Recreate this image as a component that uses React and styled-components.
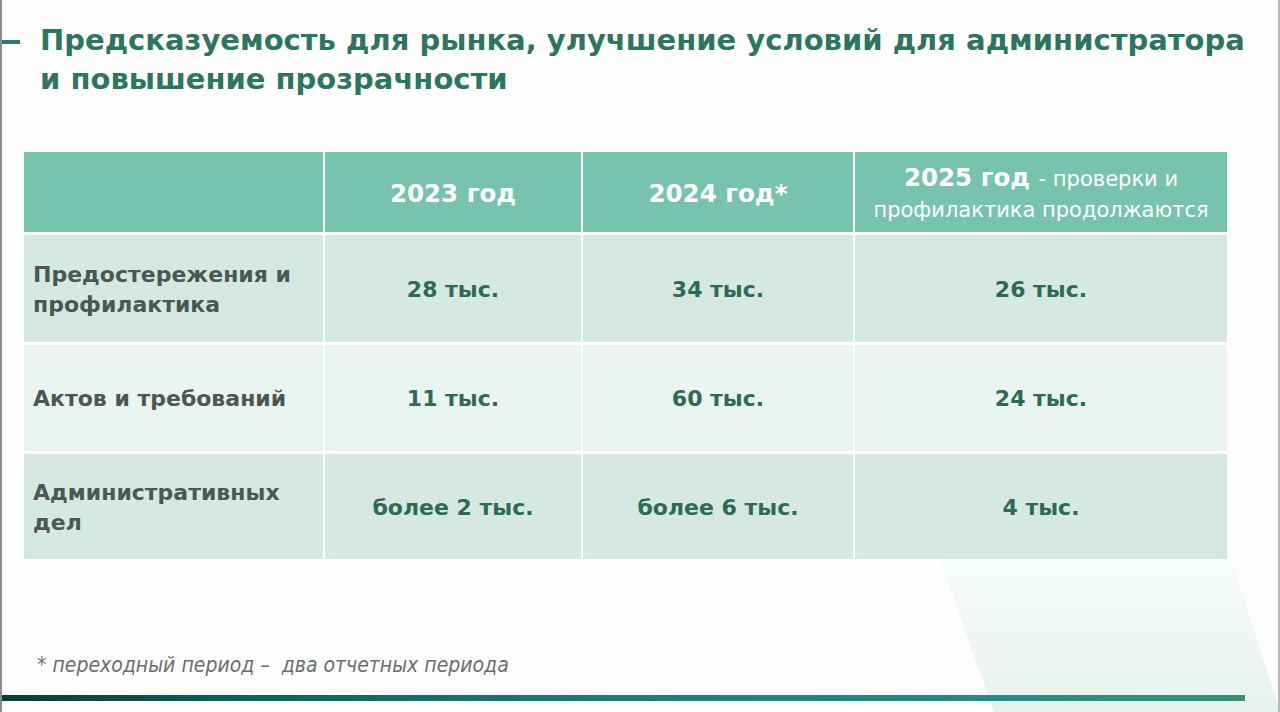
import React from 'react';
import styled, { createGlobalStyle } from 'styled-components';

const GlobalStyle = createGlobalStyle`
  html, body {
    margin: 0;
    padding: 0;
    background: #ffffff;
  }
  body {
    font-family: "DejaVu Sans", Verdana, sans-serif;
  }
`;

const Slide = styled.div`
  position: relative;
  width: 1280px;
  height: 712px;
  box-sizing: border-box;
  border-left: 2px solid #8a8f8d;
  border-right: 2px solid #b5b9b7;
  background: #fdfefd;
  overflow: hidden;
  display: flex;
  flex-direction: column;
`;

const Decor = styled.svg`
  position: absolute;
  left: 0;
  top: 0;
  width: 1280px;
  height: 712px;
  pointer-events: none;
`;

const Header = styled.header`
  position: relative;
  display: flex;
  align-items: flex-start;
  padding: 21px 0 0 0;
  height: 152px;
  box-sizing: border-box;
`;

const Dash = styled.span`
  flex: none;
  width: 20px;
  height: 4px;
  margin-top: 19px;
  margin-left: -2px;
  margin-right: 20px;
  background: #2c7b72;
`;

const Title = styled.h1`
  margin: 0;
  font-size: 29px;
  line-height: 39px;
  font-weight: 700;
  color: #2d7560;
`;

const Table = styled.div`
  position: relative;
  margin-left: 22px;
  width: 1203px;
  display: grid;
  grid-template-columns: 299px 256px 270px 372px;
  grid-template-rows: 80px 107px 106px 105px;
  gap: 3px 2px;
`;

const HeadCell = styled.div`
  background: #78c3ad;
  color: #ffffff;
  display: flex;
  align-items: center;
  justify-content: center;
  text-align: center;
  padding-top: 4px;
  font-size: 24.5px;
  font-weight: 700;
  line-height: 30px;
`;

const HeadNote = styled.span`
  font-weight: 400;
  font-size: 21px;
`;

const Cell = styled.div`
  background: ${p => (p.$alt ? '#eaf4f0' : '#d5e9e2')};
  display: flex;
  align-items: center;
  justify-content: ${p => (p.$label ? 'flex-start' : 'center')};
  padding: ${p => (p.$label ? '2px 0 0 9px' : '2px 0 0 0')};
  font-size: 22px;
  font-weight: 700;
  line-height: 30px;
  white-space: pre-line;
  color: ${p => (p.$label ? '#4b5753' : '#2e6a56')};
`;

const Footnote = styled.p`
  position: relative;
  margin: 94px 0 0 35px;
  font-family: "Liberation Sans Narrow", "DejaVu Sans Condensed", "Liberation Sans", sans-serif;
  font-style: italic;
  font-size: 21px;
  color: #6b6e6d;
  white-space: pre;
`;

const BottomBar = styled.div`
  position: relative;
  margin-top: 18px;
  margin-left: -2px;
  width: 1245px;
  height: 6px;
  background: linear-gradient(90deg, #0b3a37 0%, #13605c 20%, #1f7a75 50%, #2b8a82 80%, #3a9079 100%);
`;

const rows = [
  { label: 'Предостережения и\nпрофилактика', values: ['28 тыс.', '34 тыс.', '26 тыс.'] },
  { label: 'Актов и требований', values: ['11 тыс.', '60 тыс.', '24 тыс.'] },
  { label: 'Административных\nдел', values: ['более 2 тыс.', 'более 6 тыс.', '4 тыс.'] },
];

export default function App() {
  return (
    <>
      <GlobalStyle />
      <Slide>
        <Decor viewBox="0 0 1280 712">
          <defs>
            <linearGradient id="fade" x1="0" y1="0" x2="0" y2="1">
              <stop offset="0" stopColor="#f4f9f7" stopOpacity="0.6" />
              <stop offset="1" stopColor="#e6f1ed" stopOpacity="1" />
            </linearGradient>
          </defs>
          <polygon points="938,560 1230,560 1278,712 992,712" fill="url(#fade)" />
        </Decor>

        <Header>
          <Dash />
          <Title>
            Предсказуемость для рынка, улучшение условий для администратора
            <br />
            и повышение прозрачности
          </Title>
        </Header>

        <Table>
          <HeadCell />
          <HeadCell>2023 год</HeadCell>
          <HeadCell>2024 год*</HeadCell>
          <HeadCell>
            <div>
              2025 год <HeadNote>- проверки и</HeadNote>
              <br />
              <HeadNote>профилактика продолжаются</HeadNote>
            </div>
          </HeadCell>

          {rows.map((row, i) => (
            <React.Fragment key={'row_' + i}>
              <Cell $label $alt={i === 1}>{row.label}</Cell>
              {row.values.map((v, j) => (
                <Cell key={'v_' + j} $alt={i === 1}>{v}</Cell>
              ))}
            </React.Fragment>
          ))}
        </Table>

        <Footnote>* переходный период –  два отчетных периода</Footnote>
        <BottomBar />
      </Slide>
    </>
  );
}
